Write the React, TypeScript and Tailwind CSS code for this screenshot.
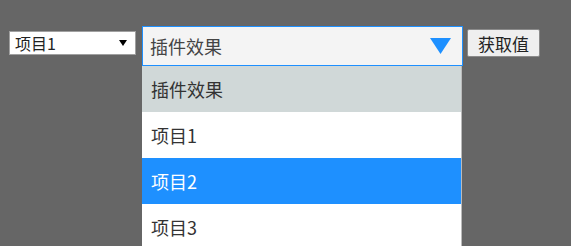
import React from "react";

const font = { fontFamily: '"Noto Sans CJK SC", "Microsoft YaHei", sans-serif' };

export default function App() {
  const items = [
    { label: "插件效果", cls: "bg-[#d0d8d8] text-[#333333]" },
    { label: "项目1", cls: "bg-white text-[#333333]" },
    { label: "项目2", cls: "bg-[#1e90ff] text-white" },
    { label: "项目3", cls: "bg-white text-[#333333]" },
  ];
  return (
    <div className="h-[246px] w-[571px] overflow-hidden bg-[#666666]" style={font}>
      <div className="flex items-start pl-[9px] pt-[26px]">
        <div className="mt-[5px] flex h-[24px] w-[127px] items-center justify-between border border-[#a0a0a0] bg-white pl-[5px] pr-[8px] text-[16px] leading-none text-[#222]">
          <span>项目1</span>
          <svg width="8" height="6" viewBox="0 0 8 6">
            <polygon points="0,0 8,0 4,6" fill="#000" />
          </svg>
        </div>
        <div className="ml-[6px] w-[321px]">
          <div className="flex h-[40px] items-center justify-between border border-[#1e90ff] bg-[#f4f4f4] pl-[7px] pr-[11px] text-[18px] leading-none text-[#444]">
            <span>插件效果</span>
            <svg width="21" height="16" viewBox="0 0 21 16">
              <polygon points="0,0 21,0 10.5,16" fill="#1e90ff" />
            </svg>
          </div>
          <div className="w-[320px] border-r border-[#bbbbbb]">
            {items.map((it) => (
              <div
                key={it.label}
                className={`flex h-[46px] items-center pl-[9px] text-[18px] leading-none ${it.cls}`}
              >
                {it.label}
              </div>
            ))}
          </div>
        </div>
        <button className="ml-[4px] mt-[3px] h-[28px] w-[73px] rounded-[2px] border border-[#8a8a8a] bg-[#efefef] text-[17px] leading-none text-[#222]">
          获取值
        </button>
      </div>
    </div>
  );
}
